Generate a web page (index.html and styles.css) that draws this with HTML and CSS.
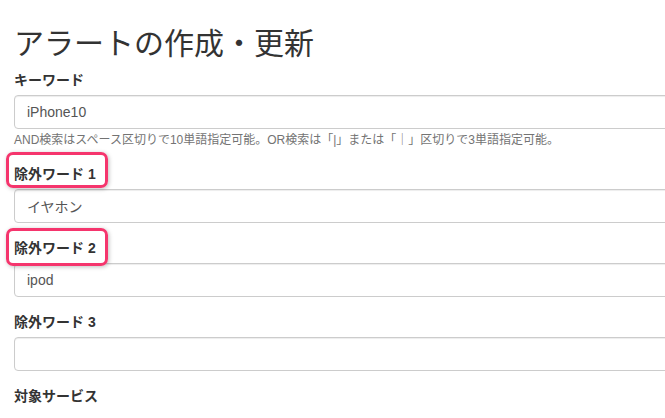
FILE: index.html
```html
<!DOCTYPE html>
<html lang="ja">
<head>
    <meta charset="UTF-8">
    <title>アラートの作成・更新</title>
    <link rel="stylesheet" href="styles.css">
</head>
<body>
    <div class="container">
        <h2>アラートの作成・更新</h2>
        <form>
            <div class="form-group">
                <label for="keyword">キーワード</label>
                <input type="text" id="keyword" class="form-control" value="iPhone10">
                <p class="help-block">AND検索はスペース区切りで10単語指定可能。OR検索は「|」または「｜」区切りで3単語指定可能。</p>
            </div>
            <div class="form-group">
                <label for="ng1" class="marked">除外ワード 1<span class="mark mark-1"></span></label>
                <input type="text" id="ng1" class="form-control" value="イヤホン">
            </div>
            <div class="form-group">
                <label for="ng2" class="marked">除外ワード 2<span class="mark mark-2"></span></label>
                <input type="text" id="ng2" class="form-control" value="ipod">
            </div>
            <div class="form-group">
                <label for="ng3">除外ワード 3</label>
                <input type="text" id="ng3" class="form-control" value="">
            </div>
            <div class="form-group">
                <label>対象サービス</label>
            </div>
        </form>
    </div>
</body>
</html>
```

FILE: styles.css
```css
body {
    margin: 0;
    font-family: "Liberation Sans", "Noto Sans CJK JP", sans-serif;
    font-size: 14px;
    line-height: 1.42857;
    color: #333;
    background-color: #fff;
    overflow: hidden;
}
.container {
    width: 720px;
    padding: 7px 0 0 14px;
}
h2 {
    font-size: 30px;
    font-weight: normal;
    line-height: 33px;
    margin: 20px 0 10px;
}
.form-group {
    margin-bottom: 15px;
}
label {
    display: inline-block;
    margin-bottom: 5px;
    font-weight: bold;
    line-height: 20px;
}
label.marked {
    position: relative;
}
.form-control {
    display: block;
    width: 100%;
    height: 34px;
    padding: 6px 12px;
    font-family: inherit;
    font-size: 14px;
    line-height: 1.42857;
    color: #555;
    background-color: #fff;
    border: 1px solid #ccc;
    border-radius: 4px;
    box-shadow: inset 0 1px 1px rgba(0,0,0,0.075);
    box-sizing: border-box;
}
.help-block {
    margin: 2px 0 0;
    font-size: 12px;
    line-height: 18px;
    color: #737373;
}
/* annotation frame drawn over the label */
.mark {
    position: absolute;
    left: -8px;
    width: 102px;
    border: 3px solid #f5356d;
    border-radius: 7px;
    box-shadow: 1px 1px 4px rgba(0,0,0,0.25);
    box-sizing: border-box;
}
.mark-1 {
    top: -12px;
    height: 36px;
}
.mark-2 {
    top: -10px;
    height: 38px;
}
```
